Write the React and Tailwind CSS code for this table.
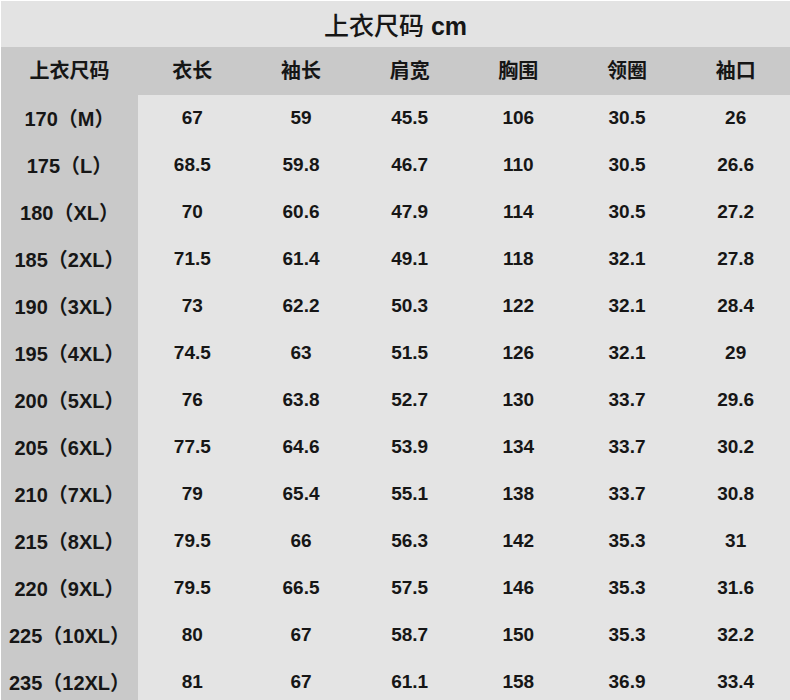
import React from 'react';

const headers = ['上衣尺码', '衣长', '袖长', '肩宽', '胸围', '领圈', '袖口'];

const rows = [
  ['170（M）', '67', '59', '45.5', '106', '30.5', '26'],
  ['175（L）', '68.5', '59.8', '46.7', '110', '30.5', '26.6'],
  ['180（XL）', '70', '60.6', '47.9', '114', '30.5', '27.2'],
  ['185（2XL）', '71.5', '61.4', '49.1', '118', '32.1', '27.8'],
  ['190（3XL）', '73', '62.2', '50.3', '122', '32.1', '28.4'],
  ['195（4XL）', '74.5', '63', '51.5', '126', '32.1', '29'],
  ['200（5XL）', '76', '63.8', '52.7', '130', '33.7', '29.6'],
  ['205（6XL）', '77.5', '64.6', '53.9', '134', '33.7', '30.2'],
  ['210（7XL）', '79', '65.4', '55.1', '138', '33.7', '30.8'],
  ['215（8XL）', '79.5', '66', '56.3', '142', '35.3', '31'],
  ['220（9XL）', '79.5', '66.5', '57.5', '146', '35.3', '31.6'],
  ['225（10XL）', '80', '67', '58.7', '150', '35.3', '32.2'],
  ['235（12XL）', '81', '67', '61.1', '158', '36.9', '33.4'],
];

const App = () => {
  return (
    <div
      className="w-[790px] h-[700px] overflow-hidden bg-[#e4e4e4] text-[#161616] border-t border-l border-white"
      style={{ fontFamily: '"Liberation Sans", "Noto Sans CJK SC", sans-serif' }}
    >
      {/* Title */}
      <div className="h-[46px] pt-[5px] bg-[#e3e3e3] flex items-center justify-center text-[25px] font-medium">
        <span className="text-[25px]">上衣尺码</span>
        <span className="ml-[7px] font-semibold">cm</span>
      </div>

      <div className="grid grid-cols-[137px_repeat(6,1fr)]">
        {/* Header row */}
        {headers.map((h) => (
          <div
            key={h}
            className="h-[48px] bg-[#c9c9c9] flex items-center justify-center text-[20px] font-bold"
          >
            {h}
          </div>
        ))}

        {/* Data rows */}
        {rows.map((row) =>
          row.map((cell, i) => (
            <div
              key={row[0] + i}
              className={
                i === 0
                  ? 'h-[47px] bg-[#c9c9c9] flex items-center justify-center text-[20px] font-bold'
                  : 'h-[47px] flex items-center justify-center text-[19px] font-bold'
              }
            >
              {cell}
            </div>
          ))
        )}
      </div>
    </div>
  );
};

export default App;
